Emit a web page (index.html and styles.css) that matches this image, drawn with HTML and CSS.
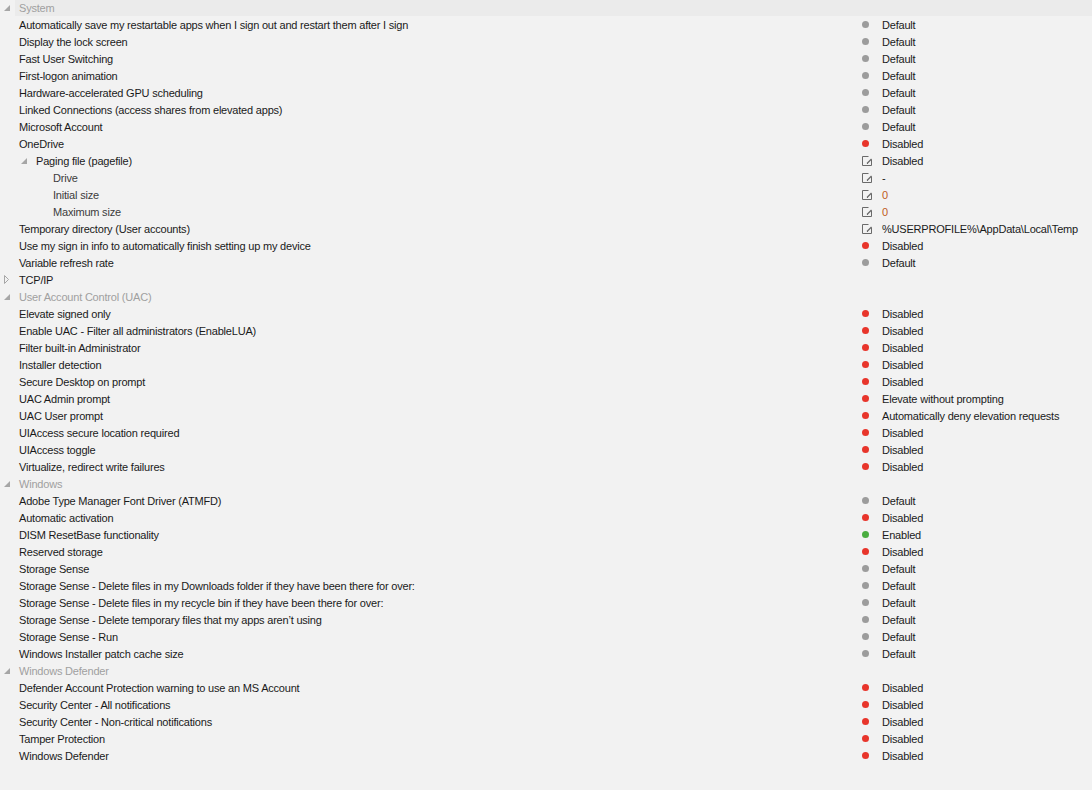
FILE: index.html
```html
<!DOCTYPE html>
<html lang="en">
<head>
    <meta charset="UTF-8">
    <title>Settings</title>
    <link rel="stylesheet" href="styles.css">
</head>
<body>
    <div id="tree"></div>

    <script>
        // d = default (grey dot), x = disabled (red), e = enabled (green), p = editable
        var rows = [
            ['g', 'System', '', '', 'open'],
            [0, 'Automatically save my restartable apps when I sign out and restart them after I sign', 'd', 'Default'],
            [0, 'Display the lock screen', 'd', 'Default'],
            [0, 'Fast User Switching', 'd', 'Default'],
            [0, 'First-logon animation', 'd', 'Default'],
            [0, 'Hardware-accelerated GPU scheduling', 'd', 'Default'],
            [0, 'Linked Connections (access shares from elevated apps)', 'd', 'Default'],
            [0, 'Microsoft Account', 'd', 'Default'],
            [0, 'OneDrive', 'x', 'Disabled'],
            [1, 'Paging file (pagefile)', 'p', 'Disabled', 'open'],
            [2, 'Drive', 'p', '-'],
            [2, 'Initial size', 'p', '0', 'num'],
            [2, 'Maximum size', 'p', '0', 'num'],
            [0, 'Temporary directory (User accounts)', 'p', '%USERPROFILE%\\AppData\\Local\\Temp'],
            [0, 'Use my sign in info to automatically finish setting up my device', 'x', 'Disabled'],
            [0, 'Variable refresh rate', 'd', 'Default'],
            ['c', 'TCP/IP', '', ''],
            ['g', 'User Account Control (UAC)', '', '', 'open'],
            [0, 'Elevate signed only', 'x', 'Disabled'],
            [0, 'Enable UAC - Filter all administrators (EnableLUA)', 'x', 'Disabled'],
            [0, 'Filter built-in Administrator', 'x', 'Disabled'],
            [0, 'Installer detection', 'x', 'Disabled'],
            [0, 'Secure Desktop on prompt', 'x', 'Disabled'],
            [0, 'UAC Admin prompt', 'x', 'Elevate without prompting'],
            [0, 'UAC User prompt', 'x', 'Automatically deny elevation requests'],
            [0, 'UIAccess secure location required', 'x', 'Disabled'],
            [0, 'UIAccess toggle', 'x', 'Disabled'],
            [0, 'Virtualize, redirect write failures', 'x', 'Disabled'],
            ['g', 'Windows', '', '', 'open'],
            [0, 'Adobe Type Manager Font Driver (ATMFD)', 'd', 'Default'],
            [0, 'Automatic activation', 'x', 'Disabled'],
            [0, 'DISM ResetBase functionality', 'e', 'Enabled'],
            [0, 'Reserved storage', 'x', 'Disabled'],
            [0, 'Storage Sense', 'd', 'Default'],
            [0, 'Storage Sense - Delete files in my Downloads folder if they have been there for over:', 'd', 'Default'],
            [0, 'Storage Sense - Delete files in my recycle bin if they have been there for over:', 'd', 'Default'],
            [0, 'Storage Sense - Delete temporary files that my apps aren\u2019t using', 'd', 'Default'],
            [0, 'Storage Sense - Run', 'd', 'Default'],
            [0, 'Windows Installer patch cache size', 'd', 'Default'],
            ['g', 'Windows Defender', '', '', 'open'],
            [0, 'Defender Account Protection warning to use an MS Account', 'x', 'Disabled'],
            [0, 'Security Center - All notifications', 'x', 'Disabled'],
            [0, 'Security Center - Non-critical notifications', 'x', 'Disabled'],
            [0, 'Tamper Protection', 'x', 'Disabled'],
            [0, 'Windows Defender', 'x', 'Disabled']
        ];

        var openArrow = '<svg width="6" height="6" viewBox="0 0 6 6"><polygon points="6,0 6,6 0,6" fill="#a6a6a6"/></svg>';
        var closedArrow = '<svg width="5" height="9" viewBox="0 0 5 9"><polygon points="0.5,0.5 4.5,4.5 0.5,8.5" fill="none" stroke="#a6a6a6"/></svg>';
        var editIcon = '<svg width="10" height="10" viewBox="0 0 10 10"><path d="M6.5 0.5H0.5V9.5H9.5V3.5" fill="none" stroke="#6a6a6a"/><path d="M5 7.5L9.5 3" stroke="#6a6a6a" stroke-width="1.2"/><rect x="5" y="7" width="1" height="1" fill="#6a6a6a"/></svg>';

        function buildTree() {
            var tree = document.getElementById('tree');
            rows.forEach(function (r, index) {
                var row = document.createElement('div');
                row.className = 'row';
                var level = r[0];
                var name = document.createElement('div');
                name.className = 'name';

                var arrow = document.createElement('span');
                arrow.className = 'arrow';
                if (level === 'g' || level === 'c') {
                    row.classList.add(level === 'g' ? 'group' : 'group-closed');
                    arrow.innerHTML = r[4] === 'open' ? openArrow : closedArrow;
                    if (index === 0) row.classList.add('hot');
                } else {
                    name.classList.add('level' + level);
                    if (r[4] === 'open') arrow.innerHTML = openArrow;
                    if (level === 2) name.classList.add('sub');
                }
                name.appendChild(arrow);

                var label = document.createElement('span');
                label.className = 'label';
                label.textContent = r[1];
                name.appendChild(label);
                row.appendChild(name);

                if (r[2]) {
                    var value = document.createElement('div');
                    value.className = 'value';
                    var icon = document.createElement('span');
                    icon.className = 'icon';
                    if (r[2] === 'p') {
                        icon.innerHTML = editIcon;
                    } else {
                        icon.innerHTML = '<span class="dot dot-' + r[2] + '"></span>';
                    }
                    value.appendChild(icon);
                    var text = document.createElement('span');
                    text.textContent = r[3];
                    if (r[4] === 'num') text.className = 'num';
                    value.appendChild(text);
                    row.appendChild(value);
                }
                tree.appendChild(row);
            });
        }

        buildTree();
    </script>
</body>
</html>
```

FILE: styles.css
```css
body {
    margin: 0;
    background: #f2f2f2;
    font-family: "Liberation Sans", Arial, sans-serif;
    font-size: 11px;
    letter-spacing: -0.2px;
    color: #1a1a1a;
}
.row {
    display: flex;
    align-items: center;
    height: 17px;
    white-space: nowrap;
}
.row.hot {
    height: 16px;
}
.row.hot .name {
    flex: 1;
    height: 16px;
}
.row.hot .name .label {
    flex: 1;
    height: 16px;
    line-height: 16px;
    margin-left: -4px;
    padding-left: 4px;
    background: #ebebeb;
}
.name {
    display: flex;
    align-items: center;
    box-sizing: border-box;
    width: 862px;
    height: 17px;
}
.arrow {
    width: 19px;
    flex: none;
    display: flex;
    align-items: center;
    padding-left: 4px;
    box-sizing: border-box;
}
.level1 {
    padding-left: 17px;
}
.level2 {
    padding-left: 34px;
}
.sub .label {
    color: #3c3c3c;
}
.group .label {
    color: #a0a0a0;
}
.group-closed .label {
    color: #1a1a1a;
}
.value {
    display: flex;
    align-items: center;
}
.icon {
    width: 20px;
    display: flex;
    align-items: center;
}
.dot {
    display: inline-block;
    width: 7px;
    height: 7px;
    border-radius: 50%;
}
.dot-d {
    background: #9c9c9c;
}
.dot-x {
    background: #e8352b;
}
.dot-e {
    background: #4aad3f;
}
.num {
    color: #c05a22;
}
```
